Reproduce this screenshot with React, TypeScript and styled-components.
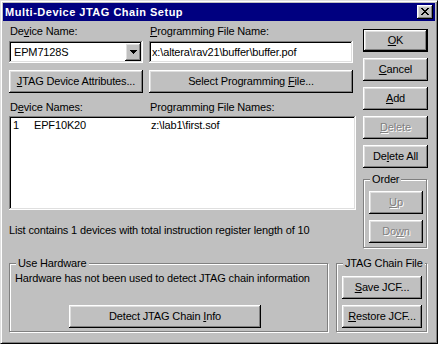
import styled, { createGlobalStyle, css } from "styled-components";

const GlobalStyle = createGlobalStyle`
  html, body {
    margin: 0;
    padding: 0;
    background: #c0c0c0;
  }
  body {
    font-family: "Liberation Sans", Arial, sans-serif;
    font-size: 11px;
    line-height: 13px;
    letter-spacing: -0.15px;
    color: #000;
  }
  * {
    box-sizing: border-box;
  }
`;

const raised = css`
  box-shadow: inset -1px -1px #000, inset 1px 1px #fff, inset -2px -2px #808080,
    inset 2px 2px #dfdfdf;
`;

const sunken = css`
  box-shadow: inset -1px -1px #fff, inset 1px 1px #808080, inset -2px -2px #dfdfdf,
    inset 2px 2px #000;
`;

const Window = styled.div`
  width: 438px;
  height: 344px;
  background: #c0c0c0;
  border: 1px solid;
  border-color: #dfdfdf #000 #000 #dfdfdf;
  box-shadow: inset 1px 1px #fff, inset -1px -1px #808080;
  padding: 2px;
  display: flex;
  flex-direction: column;
`;

const TitleBar = styled.div`
  height: 18px;
  flex-shrink: 0;
  background: #000080;
  color: #fff;
  font-weight: bold;
  letter-spacing: 0.5px;
  display: flex;
  align-items: center;
  justify-content: space-between;
  padding: 0 2px 0 2px;
`;

const CloseButton = styled.div`
  width: 16px;
  height: 14px;
  background: #c0c0c0;
  ${raised};
  padding: 3px 0 0 4px;
  svg {
    display: block;
  }
`;

const Body = styled.div`
  flex: 1;
  padding: 4px 7px 0 6px;
  display: flex;
  flex-direction: column;
`;

const Top = styled.div`
  display: flex;
  gap: 7px;
`;

const Main = styled.div`
  width: 347px;
  display: flex;
  flex-direction: column;
`;

const FieldGrid = styled.div<{ $mt?: number }>`
  display: grid;
  grid-template-columns: 134px 204px;
  column-gap: 6px;
  margin-top: ${(p) => p.$mt ?? 0}px;
`;

const Label = styled.div`
  height: 13px;
  padding-left: 1px;
  white-space: nowrap;
`;

const Combo = styled.div`
  margin-top: 3px;
  height: 22px;
  background: #fff;
  ${sunken};
  padding: 2px;
  display: flex;
  align-items: center;
`;

const ComboText = styled.span`
  flex: 1;
  padding-left: 3px;
`;

const DropButton = styled.div`
  width: 16px;
  height: 18px;
  background: #c0c0c0;
  ${raised};
  display: flex;
  align-items: center;
  justify-content: center;
  svg {
    display: block;
  }
`;

const Edit = styled.div`
  margin-top: 3px;
  height: 22px;
  background: #fff;
  ${sunken};
  padding: 0 3px;
  display: flex;
  align-items: center;
  white-space: nowrap;
  overflow: hidden;
`;

const Button = styled.button<{ $default?: boolean; $w?: number; $mt?: number; $ml?: number }>`
  display: flex;
  align-items: center;
  justify-content: center;
  flex-shrink: 0;
  height: 23px;
  width: ${(p) => (p.$w ? `${p.$w}px` : "100%")};
  margin: ${(p) => p.$mt ?? 0}px 0 0 ${(p) => p.$ml ?? 0}px;
  padding: 0;
  font: inherit;
  line-height: 13px;
  letter-spacing: inherit;
  color: #000;
  background: #c0c0c0;
  border: ${(p) => (p.$default ? "1px solid #000" : "none")};
  ${raised};
  white-space: nowrap;

  &:disabled {
    color: #808080;
    text-shadow: 1px 1px 0 #fff;
  }
`;

const ListBox = styled.div`
  margin-top: 2px;
  height: 94px;
  background: #fff;
  ${sunken};
  padding: 3px 4px;
`;

const ListRow = styled.div`
  display: grid;
  grid-template-columns: 21px 117px 1fr;
  white-space: nowrap;
`;

const Status = styled.div`
  margin-top: 14px;
  white-space: nowrap;
`;

const Side = styled.div`
  width: 65px;
  padding-top: 4px;
  display: flex;
  flex-direction: column;
  gap: 6px;
`;

const Group = styled.div<{ $w: number; $mt?: number }>`
  width: ${(p) => p.$w}px;
  height: 69px;
  margin-top: ${(p) => p.$mt ?? 0}px;
  border: 1px solid #808080;
  box-shadow: inset 1px 1px #fff, 1px 1px 0 #fff;
  display: flex;
  flex-direction: column;
  align-items: flex-start;
`;

const Caption = styled.span`
  margin: -7px 0 0 6px;
  padding: 0 2px;
  height: 13px;
  background: #c0c0c0;
  white-space: nowrap;
`;

const GroupText = styled.div`
  margin: 2px 0 0 5px;
  white-space: nowrap;
`;

const Bottom = styled.div`
  display: flex;
  gap: 8px;
  margin-top: 15px;
`;

const CloseGlyph = () => (
  <svg width="8" height="7" viewBox="0 0 8 7" shapeRendering="crispEdges">
    <path
      fill="#000"
      d="M0 0h2v1h-2z M6 0h2v1h-2z M1 1h2v1h-2z M5 1h2v1h-2z M2 2h4v1h-4z M3 3h2v1h-2z M2 4h4v1h-4z M1 5h2v1h-2z M5 5h2v1h-2z M0 6h2v1h-2z M6 6h2v1h-2z"
    />
  </svg>
);

const DownArrow = () => (
  <svg width="7" height="4" viewBox="0 0 7 4" shapeRendering="crispEdges">
    <path fill="#000" d="M0 0h7v1h-1v1h-1v1h-1v1h-1v-1h-1v-1h-1v-1h-1z" />
  </svg>
);

const App = () => {
  return (
    <>
      <GlobalStyle />
      <Window>
        <TitleBar>
          <span>Multi-Device JTAG Chain Setup</span>
          <CloseButton>
            <CloseGlyph />
          </CloseButton>
        </TitleBar>
        <Body>
          <Top>
            <Main>
              <FieldGrid>
                <Label>
                  De<u>v</u>ice Name:
                </Label>
                <Label>
                  <u>P</u>rogramming File Name:
                </Label>
                <Combo>
                  <ComboText>EPM7128S</ComboText>
                  <DropButton>
                    <DownArrow />
                  </DropButton>
                </Combo>
                <Edit>x:\altera\rav21\buffer\buffer.pof</Edit>
                <Button $mt={7}>
                  <span>
                    <u>J</u>TAG Device Attributes...
                  </span>
                </Button>
                <Button $mt={7}>
                  <span>
                    Select Programming <u>F</u>ile...
                  </span>
                </Button>
              </FieldGrid>
              <FieldGrid $mt={8}>
                <Label>
                  D<u>e</u>vice Names:
                </Label>
                <Label>Programming File Names:</Label>
              </FieldGrid>
              <ListBox>
                <ListRow>
                  <span>1</span>
                  <span>EPF10K20</span>
                  <span>z:\lab1\first.sof</span>
                </ListRow>
              </ListBox>
              <Status>
                List contains 1 devices with total instruction register length of 10
              </Status>
            </Main>
            <Side>
              <Button $default>
                <span>
                  <u>O</u>K
                </span>
              </Button>
              <Button>
                <span>
                  <u>C</u>ancel
                </span>
              </Button>
              <Button>
                <span>
                  <u>A</u>dd
                </span>
              </Button>
              <Button disabled>
                <span>
                  <u>D</u>elete
                </span>
              </Button>
              <Button>
                <span>
                  De<u>l</u>ete All
                </span>
              </Button>
              <Group $w={64} $mt={5}>
                <Caption>Order</Caption>
                <Button disabled $w={54} $mt={5} $ml={5}>
                  <span>
                    <u>U</u>p
                  </span>
                </Button>
                <Button disabled $w={54} $mt={6} $ml={5}>
                  <span>
                    Do<u>w</u>n
                  </span>
                </Button>
              </Group>
            </Side>
          </Top>
          <Bottom>
            <Group $w={319}>
              <Caption>Use Hardware</Caption>
              <GroupText>Hardware has not been used to detect JTAG chain information</GroupText>
              <Button $w={192} $mt={20} $ml={59}>
                <span>
                  Detect JTAG Chain <u>I</u>nfo
                </span>
              </Button>
            </Group>
            <Group $w={91}>
              <Caption>JTAG Chain File</Caption>
              <Button $w={80} $mt={6} $ml={5}>
                <span>
                  <u>S</u>ave JCF...
                </span>
              </Button>
              <Button $w={80} $mt={6} $ml={5}>
                <span>
                  <u>R</u>estore JCF...
                </span>
              </Button>
            </Group>
          </Bottom>
        </Body>
      </Window>
    </>
  );
};

export default App;
